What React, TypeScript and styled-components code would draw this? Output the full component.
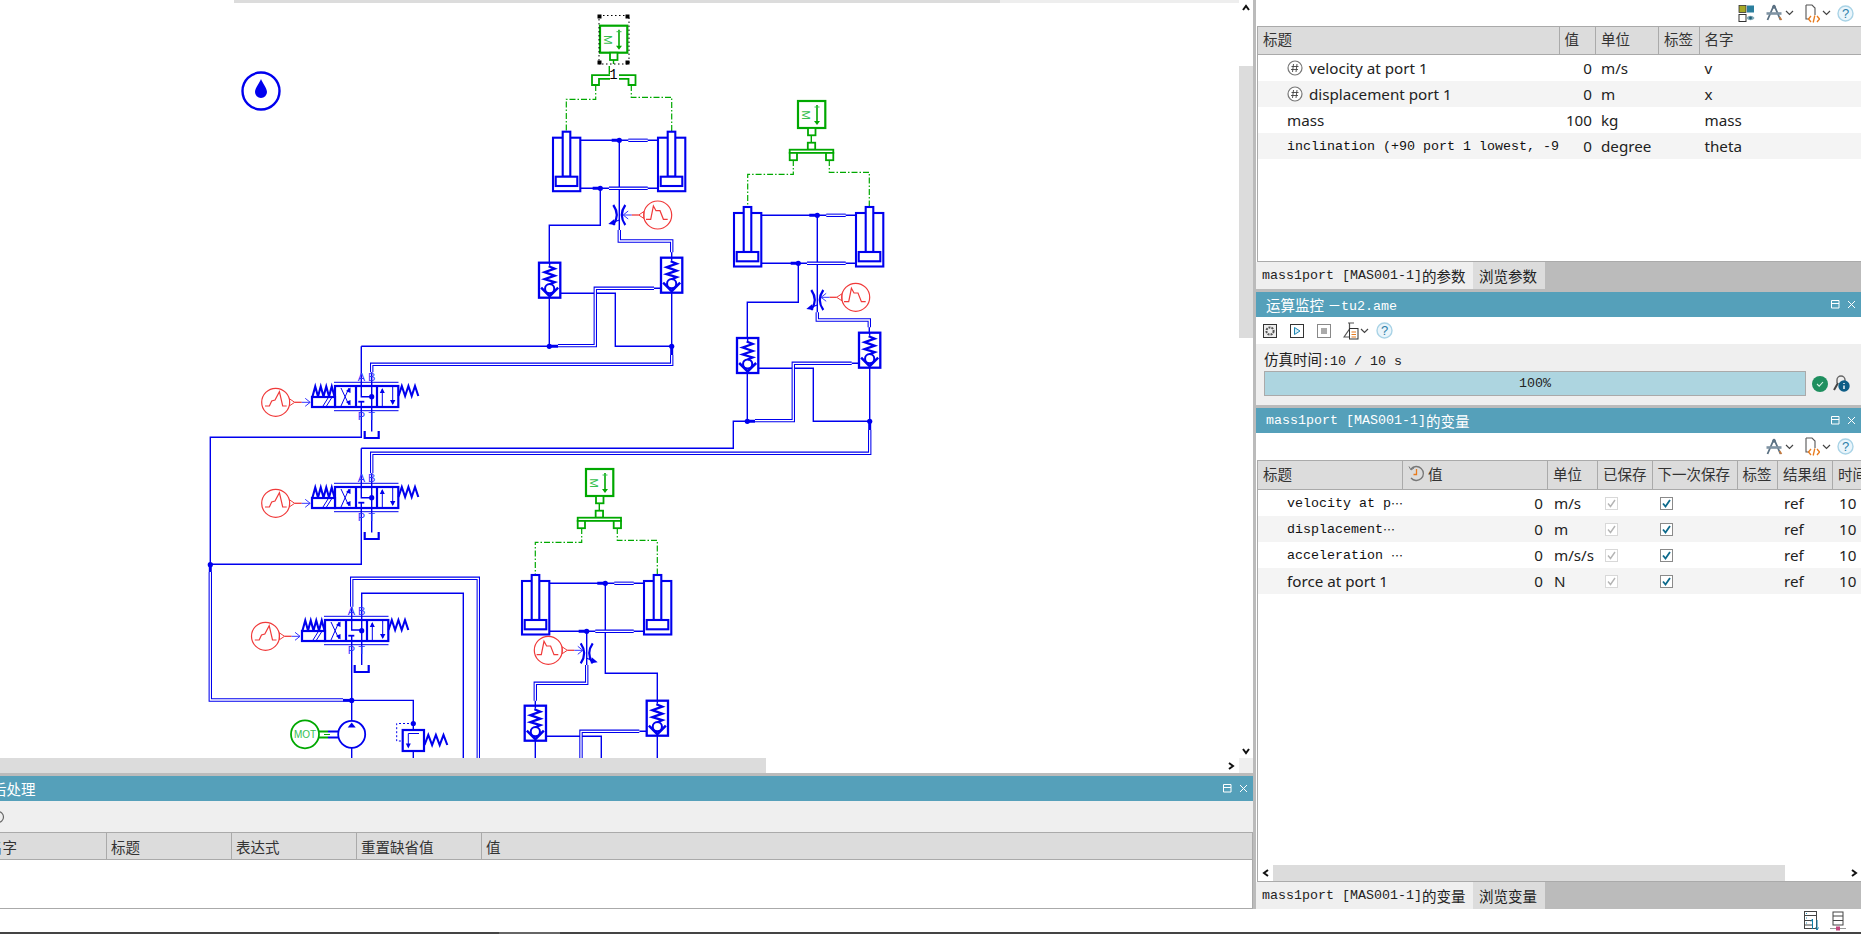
import React from "react";
import styled, { createGlobalStyle } from "styled-components";

const BLUE = "#0000ee";
const GREEN = "#00a800";
const RED = "#f03a3a";
const SANS = `"Noto Sans", "Noto Sans CJK SC", sans-serif`;
const MONOF = `"Liberation Mono", "Noto Sans CJK SC", monospace`;

const Global = createGlobalStyle`
  html, body { margin: 0; padding: 0; background: #fff; overflow: hidden; }
  * { box-sizing: border-box; }
`;

const Page = styled.div`
  width: 1861px; height: 934px; display: flex; flex-direction: column;
  font-family: ${SANS}; font-size: 14px; color: #222; background: #fff; overflow: hidden;
`;
const Main = styled.div`
  height: 909px; display: grid; grid-template-columns: 1253px 3px 605px;
`;
const LeftCol = styled.div`display: flex; flex-direction: column; min-width: 0;`;
const Sash = styled.div`background: #bbb;`;
const RightCol = styled.div`display: flex; flex-direction: column; min-width: 0;`;
const Canvas = styled.div`
  position: relative; height: 773px; display: grid;
  grid-template-columns: 1239px 14px; grid-template-rows: 758px 15px;
`;
const TopStrip = styled.div`
  position: absolute; left: 234px; top: 0; width: 1006px; height: 3px;
  background: linear-gradient(to right, #dcdcdc 0 766px, #eeeeee 766px);
`;
const Diagram = styled.svg`display: block; width: 1239px; height: 758px;`;
const VScroll = styled.div`
  display: flex; flex-direction: column; align-items: center; position: relative; background: #fff;
`;
const VThumb = styled.div`
  width: 14px; height: 272px; margin-top: 50px; background: #dcdcdc;
`;
const ArrowBox = styled.div<{ $h?: number }>`
  height: ${(p) => p.$h ?? 16}px; display: flex; align-items: center; justify-content: center; flex: none;
`;
const VBottom = styled.div`margin-top: auto;`;
const HScroll = styled.div`display: flex; align-items: stretch; background: #fff;`;
const HThumb = styled.div<{ $w: number; $ml?: number }>`
  width: ${(p) => p.$w}px; margin-left: ${(p) => p.$ml ?? 0}px; background: #dcdcdc; flex: none;
`;
const HEnd = styled.div`margin-left: auto; width: 12px; display: flex; align-items: center; justify-content: flex-start;`;
const Corner = styled.div`background: #efefef;`;
const SashRow = styled.div`height: 3px; background: #bbb; flex: none;`;

const PanelHead = styled.div`
  height: 25px; flex: none; background: #55a0ba; color: #fff; display: flex; align-items: center;
  font-size: 14.5px; padding-left: 10px; overflow: hidden; white-space: nowrap;
`;
const MonoPart = styled.span`font-family: ${MONOF}; font-size: 13.33px;`;
const Dots = styled.span`font-family: "Noto Sans CJK SC", sans-serif; font-size: 12px; letter-spacing: -1px;`;
const HeadClipped = styled.span`margin-left: -18px;`;
const HeadButtons = styled.div`margin-left: auto; display: flex; align-items: center; gap: 7px; padding-right: 5px;`;

const BottomPanel = styled.div`flex: 1; display: flex; flex-direction: column; min-height: 0;`;
const GrayTool = styled.div`height: 31px; background: #efefef; flex: none; position: relative; overflow: hidden;`;
const ClippedIcon = styled.svg`position: absolute; left: -9px; top: 9px;`;
const PostHead = styled.div`
  height: 28px; flex: none; background: #dcdcdc; display: grid;
  grid-template-columns: 107px 125px 125px 125px 1fr; border: 1px solid #aaa; border-left: 0;
`;
const PostCell = styled.div<{ $clip?: boolean }>`
  display: flex; align-items: center; padding-left: ${(p) => (p.$clip ? 0 : 4)}px;
  border-right: 1px solid #aaa; font-size: 14.5px; white-space: nowrap; overflow: hidden; color: #333;
  &:last-child { border-right: 0; }
`;
const PostClipText = styled.span`margin-left: -12px;`;
const PostBody = styled.div`flex: 1; border-right: 1px solid #aaa; border-bottom: 1px solid #aaa; background: #fff;`;

const WhiteTool = styled.div<{ $h: number }>`
  height: ${(p) => p.$h}px; flex: none; background: #fff; position: relative; display: flex; align-items: center; justify-content: flex-end;
`;
const ToolGroup = styled.div`display: flex; align-items: center; padding-right: 7px;`;
const TBtn = styled.span<{ $ml?: number }>`display: inline-flex; align-items: center; margin-left: ${(p) => p.$ml ?? 0}px;`;
const LeftTool = styled(WhiteTool)`justify-content: flex-start; padding-left: 7px;`;

const TableBox = styled.div<{ $h?: number }>`
  ${(p) => (p.$h ? `height: ${p.$h}px; flex: none;` : "flex: 1;")}
  margin-left: 1px; border: 1px solid #aaa; border-right: 0; display: flex; flex-direction: column;
  background: #fff; min-height: 0; overflow: hidden;
`;
const HeadRow = styled.div<{ $cols: string; $h: number }>`
  display: grid; grid-template-columns: ${(p) => p.$cols}; height: ${(p) => p.$h}px; flex: none;
  background: #dcdcdc; border-bottom: 1px solid #aaa;
`;
const HeadCell = styled.div`
  display: flex; align-items: center; padding-left: 5px; gap: 3px; font-size: 14.5px; color: #333;
  border-right: 1px solid #aaa; white-space: nowrap; overflow: hidden; padding-bottom: 4px;
  &:last-child { border-right: 0; }
`;
const BodyRow = styled.div<{ $cols: string; $alt?: boolean }>`
  display: grid; grid-template-columns: ${(p) => p.$cols}; height: 26px; flex: none;
  background: ${(p) => (p.$alt ? "#f4f4f4" : "#fff")};
`;
const Cell = styled.div<{ $pl?: number; $right?: number; $mono?: boolean }>`
  display: flex; align-items: center; white-space: pre; overflow: hidden;
  padding-left: ${(p) => p.$pl ?? 0}px;
  ${(p) => (p.$right !== undefined ? `justify-content: flex-end; padding-right: ${p.$right}px;` : "")}
  font-family: ${(p) => (p.$mono ? MONOF : SANS)};
  font-size: ${(p) => (p.$mono ? "13.33px" : "15.2px")};
  color: ${(p) => (p.$mono ? "#111" : "#222")};
`;
const CheckCell = styled(Cell)`padding-left: 7px;`;
const Box = styled.span<{ $on?: boolean }>`
  width: 13px; height: 13px; display: inline-flex; align-items: center; justify-content: center;
  border: 1px solid ${(p) => (p.$on ? "#8a8a8a" : "#d8d8d8")}; background: #fff;
`;
const Spacer = styled.div`flex: 1;`;
const ScrollH = styled.div`height: 16px; flex: none; display: flex; align-items: stretch; background: #fff;`;
const ArrowSlot = styled.div<{ $w: number }>`width: ${(p) => p.$w}px; display: flex; align-items: center; justify-content: center; flex: none;`;

const TabBar = styled.div`height: 27px; flex: none; background: #bbb; display: flex;`;
const Tab = styled.div<{ $active?: boolean; $w: number }>`
  width: ${(p) => p.$w}px; background: ${(p) => (p.$active ? "#efefef" : "#dcdcdc")}; display: flex; align-items: center;
  padding-left: 6px; font-size: 14.5px; white-space: nowrap; overflow: hidden; color: #222;
`;
const TabRest = styled.div`height: 3px; background: #bbb; flex: none;`;

const MonitorBody = styled.div`
  height: 61px; flex: none; background: #efefef; padding: 6px 7px 0 8px; display: flex; flex-direction: column; gap: 2px;
`;
const TimeLabel = styled.div`height: 19px; line-height: 19px; font-size: 14.5px; white-space: nowrap;`;
const ProgressRow = styled.div`display: flex; align-items: center;`;
const Progress = styled.div`
  width: 542px; height: 25px; background: #add5e0; border: 1px solid #aaa; display: flex; align-items: center; justify-content: center;
  font-family: ${MONOF}; font-size: 13.33px;
`;
const StatusBar = styled.div`
  height: 23px; flex: none; background: #fff; display: flex; align-items: center; justify-content: flex-end; gap: 10px; padding-right: 15px;
`;
const DarkBar = styled.div`
  height: 2px; flex: none; background: linear-gradient(to right, #444 0 499px, #666 499px 560px, #444 560px);
`;

/* ---------- diagram parts ---------- */
const W = ({ d, c = BLUE, w = 1.4 }: { d: string; c?: string; w?: number }) => <path d={d} fill="none" stroke={c} strokeWidth={w} />;
const Pipe = ({ d }: { d: string }) => (
  <g fill="none">
    <path d={d} stroke={BLUE} strokeWidth={3.4} />
    <path d={d} stroke="#fff" strokeWidth={1.3} />
  </g>
);
const Dot = ({ x, y }: { x: number; y: number }) => <circle cx={x} cy={y} r={2.6} fill={BLUE} />;
const Thick = ({ d }: { d: string }) => <path d={d} fill="none" stroke={BLUE} strokeWidth={3} />;
const Dash = ({ d }: { d: string }) => <path d={d} fill="none" stroke={GREEN} strokeWidth={1.2} strokeDasharray="6 2 1.5 2" />;

const Cylinder = ({ x, y }: { x: number; y: number }) => (
  <g fill="#fff" stroke={BLUE} strokeWidth={2.1}>
    <rect x={x} y={y} width={27.3} height={53.5} />
    <rect x={x + 9.7} y={y - 6} width={7.6} height={45} />
    <rect x={x + 2.7} y={y + 39} width={21.6} height={9.3} />
  </g>
);

const Mass = ({ x, y }: { x: number; y: number }) => (
  <g>
    <rect x={x} y={y} width={27.3} height={27} fill="#fff" stroke={GREEN} strokeWidth={2.2} />
    <rect x={x + 10} y={y + 27} width={7.5} height={7.3} fill="#fff" stroke={GREEN} strokeWidth={1.8} />
    <text x={x + 8} y={y + 14} fontSize={11.5} fontFamily="Liberation Sans" fill="#35c050" textAnchor="middle" transform={`rotate(90 ${x + 8} ${y + 14}) translate(0 4)`}>M</text>
    <path d={`M${x + 19} ${y + 4}V${y + 22}`} stroke={GREEN} strokeWidth={1.6} />
    <path d={`M${x + 16.5} ${y + 6}h5`} stroke="#35c050" strokeWidth={1} />
    <path d={`M${x + 16} ${y + 20}h6l-3 4z`} fill={GREEN} />
  </g>
);

const Splitter = ({ x, y, w }: { x: number; y: number; w: number }) => {
  const mid = x + w / 2;
  return (
    <g fill="#fff" stroke={GREEN} strokeWidth={1.8}>
      <rect x={mid - 3.7} y={y - 7} width={7.4} height={7} />
      <rect x={x} y={y} width={w} height={3.2} />
      <rect x={x} y={y + 3.2} width={7.3} height={7.3} />
      <rect x={x + w - 7.3} y={y + 3.2} width={7.3} height={7.3} />
    </g>
  );
};

const Check = ({ x, y }: { x: number; y: number }) => {
  const c = x + 10.65;
  return (
    <g>
      <rect x={x} y={y} width={21.3} height={35} fill="#fff" stroke={BLUE} strokeWidth={2.3} />
      <path d={`M${c} ${y}v3`} stroke={BLUE} strokeWidth={1.4} />
      <path d={`M${c - 1} ${y + 3.5}l6 2.5l-10 3.5l10 3.5l-10 3.5l10 3l-5 2`} fill="none" stroke={BLUE} strokeWidth={2.3} />
      <circle cx={c} cy={y + 26} r={4.6} fill="none" stroke={BLUE} strokeWidth={2} />
      <path d={`M${c - 8.5} ${y + 25}L${c} ${y + 33.5}L${c + 8.5} ${y + 25}`} fill="none" stroke={BLUE} strokeWidth={2.5} />
    </g>
  );
};

const Signal = ({ cx, cy, dir, alt }: { cx: number; cy: number; dir: 1 | -1; alt?: boolean }) => {
  const wave = alt
    ? `M${cx - 10.7} ${cy + 3.7}H${cx - 6.3}L${cx - 4} ${cy - 1.3}L${cx - 0.7} ${cy - 2.3}L${cx + 3.7} ${cy - 10.7}L${cx + 7} ${cy + 3.7}H${cx + 11}`
    : `M${cx - 11.7} ${cy + 4.3}H${cx - 7}L${cx - 4.3} ${cy - 9}L${cx - 1.7} ${cy - 4.3}H${cx + 2.3}L${cx + 5.7} ${cy + 4.3}H${cx + 10}`;
  const e = cx + dir * 13.8;
  const tip = cx + dir * 19;
  const lineEnd = cx + dir * 26;
  const arrowEnd = cx + dir * 34.5;
  return (
    <g>
      <circle cx={cx} cy={cy} r={14} fill="#fff" stroke={RED} strokeWidth={1.2} />
      <path d={wave} fill="none" stroke={RED} strokeWidth={1.2} />
      <path d={`M${e} ${cy - 3.5}L${tip} ${cy}L${e} ${cy + 3.5}Z`} fill="none" stroke={RED} strokeWidth={1} />
      <path d={`M${tip} ${cy}H${lineEnd}`} stroke={RED} strokeWidth={1.3} />
      <path d={`M${lineEnd} ${cy}H${arrowEnd}M${arrowEnd - dir * 5} ${cy - 4}L${arrowEnd} ${cy}L${arrowEnd - dir * 5} ${cy + 4}`} fill="none" stroke="#3333ff" strokeWidth={1} />
    </g>
  );
};

const Orifice = ({ cx, cy, dir }: { cx: number; cy: number; dir: 1 | -1 }) => (
  <g fill="none" stroke={BLUE}>
    <path d={`M${cx - 6} ${cy - 10}Q${cx + 1} ${cy} ${cx - 6} ${cy + 10}`} strokeWidth={2.2} />
    <path d={`M${cx + 6} ${cy - 10}Q${cx - 1} ${cy} ${cx + 6} ${cy + 10}`} strokeWidth={2.2} />
    <path d={`M${cx} ${cy + 5}L${cx + dir * 8} ${cy + 8}`} strokeWidth={1.2} />
    <path d={`M${cx + dir * 5} ${cy + 4}L${cx + dir * 11} ${cy + 9}L${cx + dir * 4} ${cy + 10}Z`} fill={BLUE} stroke="none" />
  </g>
);

const Zig = ({ x, y, n, step, h }: { x: number; y: number; n: number; step: number; h: number }) => {
  let d = `M${x} ${y + h}`;
  for (let i = 0; i < n; i++) d += `L${x + step * i + step / 2} ${y}L${x + step * (i + 1)} ${y + h}`;
  return <path d={d} fill="none" stroke={BLUE} strokeWidth={2.1} />;
};

const Valve = ({ x, y }: { x: number; y: number }) => {
  const A = x + 26.3;
  const B = x + 36.7;
  const lbl = { fontSize: 11, fontFamily: "Liberation Sans", fill: "#3333ff", textAnchor: "middle" as const };
  return (
    <g>
      <Zig x={x - 22.5} y={y + 0.5} n={4} step={5.5} h={10} />
      <Zig x={x + 63.5} y={y} n={3} step={6.6} h={10} />
      <path d={`M${x - 1} ${y - 3.7}H${x + 63.5}M${x - 1} ${y + 24.7}H${x + 63.5}`} stroke={BLUE} strokeWidth={1} />
      <rect x={x} y={y} width={63.3} height={21} fill="none" stroke={BLUE} strokeWidth={2.2} />
      <path d={`M${x + 21} ${y}V${y + 21}M${x + 42} ${y}V${y + 21}`} stroke={BLUE} strokeWidth={2.2} />
      <rect x={x - 23} y={y + 11} width={23} height={10} fill="#fff" stroke={BLUE} strokeWidth={2.2} />
      <path d={`M${x - 12} ${y + 20}L${x - 7} ${y + 12}M${x - 8.5} ${y + 20}L${x - 3.5} ${y + 12}`} stroke={BLUE} strokeWidth={1} />
      <path d={`M${x + 6} ${y + 2}L${x + 14} ${y + 19}M${x + 6} ${y + 20}L${x + 14} ${y + 2}`} stroke={BLUE} strokeWidth={1} />
      <path d={`M${x + 11} ${y + 5}L${x + 15.5} ${y + 1.5}V${y + 7}ZM${x + 11} ${y + 16}L${x + 15.5} ${y + 19.5}V${y + 14}Z`} fill={BLUE} />
      <path d={`M${x + 47.3} ${y + 20}V${y + 3}M${x + 57.7} ${y + 1}V${y + 18}`} stroke={BLUE} strokeWidth={1} />
      <path d={`M${x + 44.8} ${y + 7}L${x + 47.3} ${y + 2}L${x + 49.8} ${y + 7}ZM${x + 55} ${y + 14}L${x + 57.7} ${y + 19}L${x + 60.4} ${y + 14}Z`} fill={BLUE} />
      <path d={`M${A - 3} ${y + 15.7}h6`} stroke={BLUE} strokeWidth={1.8} />
      <Dot x={B} y={y + 10.7} />
      <path d={`M${B - 7} ${y + 45}v7h14v-7`} fill="none" stroke={BLUE} strokeWidth={2.2} />
      <text x={A} y={y - 5.5} {...lbl}>A</text>
      <text x={B} y={y - 5.5} {...lbl}>B</text>
      <text x={A} y={y + 34} {...lbl}>P</text>
      <text x={B} y={y + 34} {...lbl}>T</text>
    </g>
  );
};

const Handle = ({ x, y }: { x: number; y: number }) => <rect x={x - 2} y={y - 2} width={4} height={4} fill="#000" />;

const Schematic = () => (
  <Diagram viewBox="0 0 1239 758">
    <circle cx={261} cy={91} r={18.5} fill="#fff" stroke={BLUE} strokeWidth={2.4} />
    <path d="M261 79c-1 3-6 9-6 13a6 6 0 0 0 12 0c0-4-5-10-6-13z" fill={BLUE} />

    {/* assembly 1 */}
    <Dash d="M595.7 85V99.3H566.3V131" />
    <Dash d="M631.3 85V97.3H671.7V131" />
    <path d="M609.3 66V74M613.5 60V64" stroke={GREEN} strokeWidth={1.4} />
    <Mass x={600} y={25.7} />
    <rect x={599} y={15.5} width={30} height={48.5} fill="none" stroke="#000" strokeWidth={1} strokeDasharray="1.5 2.5" />
    <Handle x={599.5} y={16.5} /><Handle x={627.5} y={16.5} /><Handle x={599.5} y={62.5} /><Handle x={627.5} y={62.5} />
    <g fill="#fff" stroke={GREEN} strokeWidth={1.8}>
      <path d="M610 75.2H592V85H599V78.8H610" />
      <path d="M619 75.2H635.5V85H628.5V78.8H619" />
    </g>
    <text x={613.5} y={79} fontSize={14} fontFamily="Liberation Mono" fill="#000" textAnchor="middle">1</text>
    <Cylinder x={553} y={137.7} />
    <Cylinder x={658} y={137.7} />
    <W d="M580 140.3H658M580 188.3H658" />
    <Thick d="M611.7 140.3H619.3M592.7 188.3H600.3" />
    <W d="M619.3 140.3V230" />
    <W d="M600.3 188.3V225.3H549.3V263" />
    <Pipe d="M628.3 140.3H647.7" />
    <Pipe d="M609 188.3H647.7" />
    <Dot x={619.3} y={140.3} /><Dot x={600.3} y={188.3} />
    <Orifice cx={619.3} cy={215} dir={-1} />
    <Signal cx={657.7} cy={215} dir={-1} />
    <Pipe d="M619.3 230V241H671.7V252.3" />
    <W d="M671.7 252.3V258" />
    <W d="M549.3 298V346.3M671.7 292.7V346.3M557.3 293.3H615.3V346.3H671.7M661 288.3H654M361.3 346.3H549.3" />
    <Pipe d="M654 288.3H595.3V345.6H558" />
    <Thick d="M549.3 346.3H558M671.7 346.3V355" />
    <Dot x={549.3} y={346.3} /><Dot x={671.7} y={346.3} />
    <Check x={539} y={262.7} />
    <Check x={661} y={257.7} />
    <Pipe d="M671.7 355V364.3H371.7V372.3" />

    {/* assembly 2 */}
    <Dash d="M793.3 160V174.3H747.7V207" />
    <Dash d="M829.3 160V172.3H869.3V207" />
    <path d="M811.3 135V142.3" stroke={GREEN} strokeWidth={1.4} />
    <Mass x={798} y={101} />
    <Splitter x={789.7} y={149.7} w={43.6} />
    <Cylinder x={734} y={213} />
    <Cylinder x={856} y={213} />
    <W d="M761.3 215.3H856M761.3 263.3H856" />
    <Thick d="M809.3 215.3H817.3M790.7 263.3H798.3" />
    <W d="M817.3 215.3V312.3M798.3 263.3V302.3H747.3V338" />
    <Pipe d="M826.3 215.3H845.7" />
    <Pipe d="M807 263.3H845.7" />
    <Dot x={817.3} y={215.3} /><Dot x={798.3} y={263.3} />
    <Orifice cx={817.3} cy={300} dir={-1} />
    <Signal cx={855.7} cy={297.3} dir={-1} />
    <Pipe d="M817.3 312.3V320H869.3V327.3" />
    <W d="M869.3 327.3V333M747.3 373V421.3M755.3 368.3H813.3V421.3H869.7M859 363.3H851.7M869.7 368V421.3" />
    <Pipe d="M851.7 363.3H793.3V420.6H755" />
    <Thick d="M747.3 421.3H755M869.7 421.3V430" />
    <Dot x={747.3} y={421.3} /><Dot x={869.7} y={421.3} />
    <Check x={737} y={338} />
    <Check x={859} y={332.7} />
    <Pipe d="M869.7 430V453.3H371.7V473.3" />
    <W d="M361.3 448.3H733.3V421.3H747.3" />

    {/* valve 1 & 2 */}
    <W d="M371.7 372.3V431.5M361.3 346.3V396.7H371.7M361.3 401.7V437.3H210.3V565" />
    <Valve x={335} y={386} />
    <W d="M371.7 473.3V532.5M361.3 448.3V497.7H371.7M361.3 502.7V564.3H210.3" />
    <Valve x={335} y={487} />
    <Signal cx={275.7} cy={402.3} dir={1} alt />
    <Signal cx={275.7} cy={503.3} dir={1} alt />
    <Thick d="M210.3 564.7V572" />
    <Dot x={210.3} y={564.7} />

    {/* valve 3 */}
    <Pipe d="M210.3 572V700H343" />
    <Thick d="M343 700.4H351.7" />
    <W d="M351.7 606.7V630H361.7M351.7 636V758M361.7 665V593.3H463.3V758M351.7 700.4H413.3V730" />
    <Pipe d="M351.7 606.7V578.3H478.3V758" />
    <Valve x={325} y={620} />
    <Signal cx={265.5} cy={636.3} dir={1} alt />
    <Dot x={351.7} y={700.4} />
    <circle cx={351.7} cy={734.3} r={13.5} fill="#fff" stroke={BLUE} strokeWidth={1.8} />
    <path d="M347.7 727.5H355.7L351.7 722.5Z" fill={BLUE} />
    <circle cx={305} cy={734.3} r={14} fill="#fff" stroke={GREEN} strokeWidth={1.8} />
    <text x={305} y={738} fontSize={10} fontFamily="Liberation Sans" fill="#35c050" textAnchor="middle">MOT</text>
    <path d="M319 731.5H328M319 737.5H328" stroke={GREEN} strokeWidth={2} />
    <path d="M328 731.5H338M328 737.5H338" stroke={BLUE} strokeWidth={2} />
    <path d="M324 734.5H330" stroke={GREEN} strokeWidth={1} />
    <Dot x={413.3} y={723.5} />
    <path d="M413 723.5H396.7V741H402.7" fill="none" stroke={BLUE} strokeWidth={1} strokeDasharray="2 2" />
    <rect x={402.7} y={730} width={21.3} height={21} fill="#fff" stroke={BLUE} strokeWidth={2.2} />
    <path d="M419 733.5H408.3V747" fill="none" stroke={BLUE} strokeWidth={1} />
    <path d="M405.8 743.5H410.8L408.3 748.5Z" fill={BLUE} />
    <Zig x={424.5} y={735} n={3} step={7.6} h={10} />
    <W d="M413.3 751V758" />

    {/* assembly 3 */}
    <Dash d="M581.7 528V542.3H535.3V575" />
    <Dash d="M617.3 528V540.3H657.3V575" />
    <path d="M599.3 503V511" stroke={GREEN} strokeWidth={1.4} />
    <Mass x={586} y={469} />
    <Splitter x={577.7} y={517.7} w={43.3} />
    <Cylinder x={522} y={581} />
    <Cylinder x={644} y={581} />
    <W d="M549.3 583.3H644M549.3 631.3H644" />
    <Thick d="M597.3 583.3H605.3M578.7 631.3H586.7" />
    <W d="M605.3 583.3V673.3H657.3V701M586.7 631.3V665M657.3 736V758M535.3 700.7V706M535.3 741V758M543.3 736.3H601.3V758M646.7 731.3H639.3" />
    <Pipe d="M614.3 583.3H633.7" />
    <Pipe d="M595.3 631.3H633.7" />
    <Dot x={605.3} y={583.3} /><Dot x={586.7} y={631.3} />
    <Orifice cx={586.7} cy={653.3} dir={1} />
    <Signal cx={548.3} cy={650.3} dir={1} />
    <Pipe d="M586.7 665V683.3H535.3V700.7" />
    <Pipe d="M639.3 731.3H581V758" />
    <Check x={524.7} y={705.7} />
    <Check x={646.7} y={700.7} />
  </Diagram>
);

/* ---------- small icons ---------- */
const Chev = ({ dir, w = 8, stroke = "#111", sw = 2 }: { dir: "up" | "down" | "left" | "right"; w?: number; stroke?: string; sw?: number }) => {
  const p = { up: "M1 6L4 2L7 6", down: "M1 2L4 6L7 2", left: "M6 1L2 4L6 7", right: "M2 1L6 4L2 7" }[dir];
  return <svg width={w} height={w} viewBox="0 0 8 8"><path d={p} fill="none" stroke={stroke} strokeWidth={sw} /></svg>;
};
const Caret = () => <svg width={9} height={6} viewBox="0 0 9 6"><path d="M1 1L4.5 4.5L8 1" fill="none" stroke="#444" strokeWidth={1.2} /></svg>;
const Help = () => (
  <svg width={17} height={17} viewBox="0 0 17 17">
    <circle cx={8.5} cy={8.5} r={7.5} fill="#eaf5fb" stroke="#a9d3e6" strokeWidth={1.4} />
    <text x={8.5} y={13} fontSize={13} fontFamily="Liberation Sans" fill="#2f7fa8" textAnchor="middle">?</text>
  </svg>
);
const Compass = () => (
  <svg width={18} height={18} viewBox="0 0 17 18">
    <path d="M8.5 1L2 16M8.5 1L15 16" stroke="#5b7183" strokeWidth={1.8} fill="none" />
    <path d="M1 9.5H16" stroke="#7f93a3" strokeWidth={2.6} />
    <circle cx={8.5} cy={3} r={1.8} fill="#5b7183" />
    <path d="M14 13l2 3" stroke="#c77a3c" strokeWidth={1.6} />
  </svg>
);
const FileCode = () => (
  <svg width={15} height={19} viewBox="0 0 15 19">
    <path d="M1 1H7L10 4V11M1 1V15H4" fill="none" stroke="#555" strokeWidth={1.1} />
    <path d="M6 12L3.5 15L6 18M12 12L14.5 15L12 18" fill="none" stroke="#e87b1e" strokeWidth={1.3} />
    <path d="M9.8 11.5L8.2 18.5" stroke="#e87b1e" strokeWidth={1.3} />
  </svg>
);
const GridEye = () => (
  <svg width={17} height={17} viewBox="0 0 16 17">
    <rect x={0.5} y={0.5} width={7} height={7} fill="#a7a926" stroke="#333" strokeWidth={0.8} />
    <rect x={8.5} y={0.5} width={7} height={7} fill="#2b7f9e" />
    <rect x={0.5} y={9.5} width={7} height={7} fill="#fff" stroke="#333" />
    <path d="M8 13c2-3 6-3 8 0c-2 3-6 3-8 0z" fill="#7fa9b7" />
    <circle cx={12} cy={13} r={1.4} fill="#1f5f78" />
  </svg>
);
const Restore = () => (
  <svg width={9} height={9} viewBox="0 0 9 9"><path d="M.5 .5H8V8H.5ZM.5 3.5H8" fill="none" stroke="#fff" strokeWidth={1} /></svg>
);
const Close = () => (
  <svg width={9} height={9} viewBox="0 0 9 9"><path d="M1 1L8 8M8 1L1 8" stroke="#fff" strokeWidth={1} /></svg>
);
const Hash = () => (
  <svg width={16} height={16} viewBox="0 0 16 16">
    <circle cx={8} cy={8} r={7} fill="#fff" stroke="#777" strokeWidth={1.2} />
    <path d="M6.5 4L5.5 12M10 4L9 12M4.5 6.5H11.5M4 9.5H11" stroke="#444" strokeWidth={0.9} />
  </svg>
);
const CheckMark = ({ on }: { on?: boolean }) => (
  <svg width={11} height={11} viewBox="0 0 11 11"><path d="M2 5.5L4.5 8.5L9 2" fill="none" stroke={on ? "#0d6a8c" : "#b4b4b4"} strokeWidth={on ? 1.8 : 1.4} /></svg>
);
const Clock = () => (
  <svg width={17} height={17} viewBox="0 0 17 17">
    <path d="M3 4A7 7 0 1 1 3 13" fill="none" stroke="#777" strokeWidth={1.3} />
    <path d="M1 1.5L3 5L6 3" fill="none" stroke="#777" strokeWidth={1} />
    <path d="M8.5 4V9.5H5.5" fill="none" stroke="#e87b1e" strokeWidth={1.3} />
  </svg>
);
const GearBtn = () => (
  <svg width={14} height={14} viewBox="0 0 14 14">
    <rect x={0.5} y={0.5} width={13} height={13} fill="#eee" stroke="#333" />
    <circle cx={7} cy={7} r={3.6} fill="none" stroke="#555" strokeWidth={2} strokeDasharray="2 1" />
  </svg>
);
const PlayBtn = () => (
  <svg width={14} height={14} viewBox="0 0 14 14">
    <rect x={0.5} y={0.5} width={13} height={13} fill="#fff" stroke="#333" />
    <path d="M4.5 3.5L10 7L4.5 10.5Z" fill="#d7eef8" stroke="#1f87b5" />
  </svg>
);
const StopBtn = () => (
  <svg width={14} height={14} viewBox="0 0 14 14">
    <rect x={0.5} y={0.5} width={13} height={13} fill="#fff" stroke="#888" />
    <rect x={4} y={4} width={6} height={6} fill="#aaa" />
  </svg>
);
const Flask = () => (
  <svg width={16} height={18} viewBox="0 0 16 18">
    <path d="M5 1H11M6.5 1V7L1 15H8" fill="none" stroke="#555" strokeWidth={1.2} />
    <rect x={6.5} y={6.5} width={8.5} height={10.5} fill="#fff" stroke="#333" />
    <path d="M8.5 10H13M8.5 12.5H13M8.5 15H13" stroke="#e87b1e" strokeWidth={1.2} />
  </svg>
);
const OkIcon = () => (
  <svg width={16} height={16} viewBox="0 0 16 16">
    <circle cx={8} cy={8} r={8} fill="#1f8f5f" />
    <path d="M5 8L7.2 10.2L11 6" fill="none" stroke="#d8f3e6" strokeWidth={1.1} />
  </svg>
);
const LockInfo = () => (
  <svg width={17} height={17} viewBox="0 0 17 17">
    <path d="M4 8V5a4 4 0 0 1 8 0V7" fill="none" stroke="#666" strokeWidth={1.4} />
    <path d="M1 15L5 8" stroke="#444" strokeWidth={2} />
    <circle cx={11} cy={11} r={5.7} fill="#0d5d86" />
    <path d="M11 8V9M11 10.5V14" stroke="#fff" strokeWidth={1.4} />
  </svg>
);
const Stat1 = () => (
  <svg width={16} height={20} viewBox="0 0 16 20">
    <rect x={0.5} y={0.5} width={12} height={17} fill="#fff" stroke="#444" />
    <path d="M.5 4.5H12.5M.5 9.5H8M.5 14H8" stroke="#444" />
    <path d="M2 2.5h1M2 7h1M2 12h1" stroke="#2b8fb5" />
    <path d="M8.5 18V8M8.5 8L7 10.5M13 9V19M13 19L11.5 16.5M13 19L14.5 16.5" stroke="#0d7fa8" strokeWidth={1} fill="none" />
  </svg>
);
const Stat2 = () => (
  <svg width={16} height={20} viewBox="0 0 16 20">
    <rect x={3} y={1} width={10} height={13} fill="#fff" stroke="#444" />
    <path d="M3 5H13M3 9.5H13" stroke="#444" />
    <path d="M0 17.5H16" stroke="#999" />
    <rect x={6} y={15.5} width={4} height={4} fill="#c2477e" />
  </svg>
);

const TopTools = ({ grid }: { grid?: boolean }) => (
  <ToolGroup>
    {grid && <TBtn><GridEye /></TBtn>}
    <TBtn $ml={grid ? 10 : 0}><Compass /></TBtn>
    <TBtn $ml={2}><Caret /></TBtn>
    <TBtn $ml={11}><FileCode /></TBtn>
    <TBtn $ml={2}><Caret /></TBtn>
    <TBtn $ml={6}><Help /></TBtn>
  </ToolGroup>
);
const WinButtons = () => (
  <HeadButtons><Restore /><Close /></HeadButtons>
);

const paramCols = "301.5px 36.5px 63px 40.5px 1fr";
const params = [
  { t: "velocity at port 1", v: "0", u: "m/s", n: "v", hash: true },
  { t: "displacement port 1", v: "0", u: "m", n: "x", hash: true },
  { t: "mass", v: "100", u: "kg", n: "mass" },
  { t: "inclination (+90 port 1 lowest, -9", v: "0", u: "degree", n: "theta", mono: true },
];
const varCols = "145px 145px 50px 54.5px 85px 40.5px 55px 1fr";
const vars = [
  { t: "velocity at p", u: "m/s", mono: true },
  { t: "displacement", u: "m", mono: true },
  { t: "acceleration ", u: "m/s/s", mono: true },
  { t: "force at port 1", u: "N" },
];
const TitleInner = styled.span`display: inline-flex; align-items: center; gap: 6px;`;

export default function App() {
  return (
    <Page>
      <Global />
      <Main>
        <LeftCol>
          <Canvas>
            <Schematic />
            <TopStrip />
            <VScroll>
              <ArrowBox $h={16}><Chev dir="up" /></ArrowBox>
              <VThumb />
              <VBottom><ArrowBox $h={14}><Chev dir="down" /></ArrowBox></VBottom>
            </VScroll>
            <HScroll>
              <HThumb $w={766} />
              <HEnd><ArrowSlot $w={8}><Chev dir="right" /></ArrowSlot></HEnd>
            </HScroll>
            <Corner />
          </Canvas>
          <SashRow />
          <BottomPanel>
            <PanelHead>
              <HeadClipped>后处理</HeadClipped>
              <WinButtons />
            </PanelHead>
            <GrayTool>
              <ClippedIcon width={14} height={14} viewBox="0 0 14 14"><circle cx={7} cy={7} r={5.5} fill="none" stroke="#666" strokeWidth={1.2} /></ClippedIcon>
            </GrayTool>
            <PostHead>
              <PostCell $clip><PostClipText>名字</PostClipText></PostCell>
              <PostCell>标题</PostCell>
              <PostCell>表达式</PostCell>
              <PostCell>重置缺省值</PostCell>
              <PostCell>值</PostCell>
            </PostHead>
            <PostBody />
          </BottomPanel>
        </LeftCol>
        <Sash />
        <RightCol>
          <WhiteTool $h={26}><TopTools grid /></WhiteTool>
          <TableBox $h={236}>
            <HeadRow $cols={paramCols} $h={28}>
              <HeadCell>标题</HeadCell><HeadCell>值</HeadCell><HeadCell>单位</HeadCell><HeadCell>标签</HeadCell><HeadCell>名字</HeadCell>
            </HeadRow>
            {params.map((r, i) => (
              <BodyRow key={r.t} $cols={paramCols} $alt={i % 2 === 1}>
                <Cell $pl={29} $mono={r.mono}>
                  {r.hash ? <TitleInner><Hash />{r.t}</TitleInner> : r.t}
                </Cell>
                <Cell $right={4}>{r.v}</Cell>
                <Cell $pl={5}>{r.u}</Cell>
                <Cell />
                <Cell $pl={5}>{r.n}</Cell>
              </BodyRow>
            ))}
          </TableBox>
          <TabBar>
            <Tab $active $w={217}><MonoPart>mass1port [MAS001-1]</MonoPart>的参数</Tab>
            <Tab $w={72}>浏览参数</Tab>
          </TabBar>
          <TabRest />
          <PanelHead>运算监控&nbsp;<MonoPart>－tu2.ame</MonoPart><WinButtons /></PanelHead>
          <LeftTool $h={27}>
            <TBtn><GearBtn /></TBtn>
            <TBtn $ml={13}><PlayBtn /></TBtn>
            <TBtn $ml={13}><StopBtn /></TBtn>
            <TBtn $ml={12}><Flask /></TBtn>
            <TBtn $ml={1}><Caret /></TBtn>
            <TBtn $ml={7}><Help /></TBtn>
          </LeftTool>
          <MonitorBody>
            <TimeLabel>仿真时间<MonoPart>:10 / 10 s</MonoPart></TimeLabel>
            <ProgressRow>
              <Progress>100%</Progress>
              <TBtn $ml={6}><OkIcon /></TBtn>
              <TBtn $ml={5}><LockInfo /></TBtn>
            </ProgressRow>
          </MonitorBody>
          <TabRest />
          <PanelHead><MonoPart>mass1port [MAS001-1]</MonoPart>的变量<WinButtons /></PanelHead>
          <WhiteTool $h={27}><TopTools /></WhiteTool>
          <TableBox>
            <HeadRow $cols={varCols} $h={29}>
              <HeadCell>标题</HeadCell>
              <HeadCell><Clock />值</HeadCell>
              <HeadCell>单位</HeadCell>
              <HeadCell>已保存</HeadCell>
              <HeadCell>下一次保存</HeadCell>
              <HeadCell>标签</HeadCell>
              <HeadCell>结果组</HeadCell>
              <HeadCell>时间</HeadCell>
            </HeadRow>
            {vars.map((r, i) => (
              <BodyRow key={r.t} $cols={varCols} $alt={i % 2 === 1}>
                <Cell $pl={29} $mono={r.mono}>{r.t}{r.mono && <Dots>…</Dots>}</Cell>
                <Cell $right={5}>0</Cell>
                <Cell $pl={6}>{r.u}</Cell>
                <CheckCell><Box><CheckMark /></Box></CheckCell>
                <CheckCell><Box $on><CheckMark on /></Box></CheckCell>
                <Cell />
                <Cell $pl={6}>ref</Cell>
                <Cell $pl={6}>10</Cell>
              </BodyRow>
            ))}
            <Spacer />
            <ScrollH>
              <ArrowSlot $w={15}><Chev dir="left" /></ArrowSlot>
              <HThumb $w={512} />
              <Spacer />
              <ArrowSlot $w={14}><Chev dir="right" /></ArrowSlot>
            </ScrollH>
          </TableBox>
          <TabBar>
            <Tab $active $w={217}><MonoPart>mass1port [MAS001-1]</MonoPart>的变量</Tab>
            <Tab $w={72}>浏览变量</Tab>
          </TabBar>
        </RightCol>
      </Main>
      <StatusBar><Stat1 /><Stat2 /></StatusBar>
      <DarkBar />
    </Page>
  );
}
